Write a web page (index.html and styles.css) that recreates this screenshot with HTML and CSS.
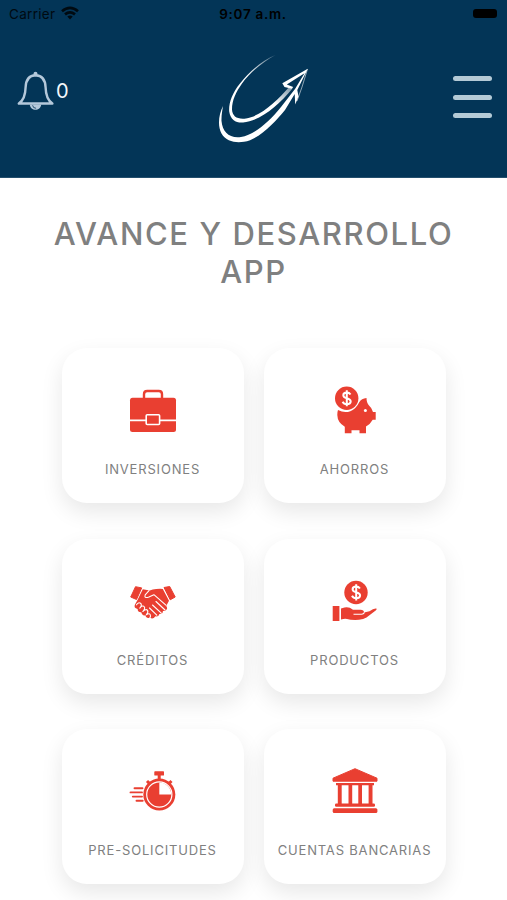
FILE: index.html
```html
<!DOCTYPE html>
<html lang="es">
<head>
<meta charset="utf-8">
<title>Avance y Desarrollo App</title>
<link rel="stylesheet" href="styles.css">
</head>
<body>
<header class="header">
  <div class="status">
    <div class="carrier"><span>Carrier</span>
      <svg width="18" height="14" viewBox="0 0 18 14" fill="none" stroke="#000" stroke-width="2.7"><path d="M1 5.2Q9-1.6 17 5.2M4 8.4q5-4.2 10 0"/><path d="M6.3 10.5q2.7-2.1 5.4 0L9 13.4z" fill="#000" stroke="none"/></svg>
    </div>
    <span class="time">9:07 a.m.</span>
    <span class="battery"></span>
  </div>
  <div class="nav">
    <div class="alerts">
      <svg width="38" height="40" viewBox="0 0 38 40" fill="none" stroke="#b4c8da" stroke-width="2.4" stroke-linejoin="round"><path d="M18.5 4.2c-7 .3-9.7 5.6-9.9 12.2C8.400 25 6.500 29.500 1.800 32.500h33.600c-4.700-3-6.600-7.500-6.800-16.100-.2-6.600-3.100-11.900-10.100-12.200z"/><circle cx="18.500" cy="2.800" r="2" fill="#b4c8da" stroke="none"/><path d="M12.800 33.500h11.400c-.5 7-10.900 7-11.400 0z" fill="#b4c8da" stroke="none"/><path d="M15.600 34.300q.4 3 3.500 3" stroke="#033557" stroke-width=".8"/></svg>
      <span class="count">0</span>
    </div>
    <svg class="logo" width="96" height="90" viewBox="14 54 96 90" fill="#fff">
      <defs><linearGradient id="fade" x1="75" y1="54" x2="50" y2="78" gradientUnits="userSpaceOnUse"><stop stop-color="#fff" stop-opacity=".25"/><stop offset="1" stop-color="#fff"/></linearGradient></defs>
      <path fill="url(#fade)" d="M75.500 55C62 60 48 73 40 83.500 32 93 28.500 104 29.200 111.500 30.500 120 36 123 43 122.500 60 121 78 106 92.500 88.500L89.500 86.500C77 101 61 116 46 118.500 37 119.500 32.500 116.500 32 109.500 32 100 36 92 42 83.500 50 72 63 62 75.500 55z"/>
      <path d="M107.800 68.700L82.300 83.300 84.500 87 91.800 88.800 93.200 87 86.800 84.400 104.500 73.300 95 89 81 107C69 122 54 135 41 137 29 138.500 22.500 132 21.500 121 21.300 115 22.400 110 23 106 18.500 115 17.500 126 21.500 133.500 26 141.500 35 143 44 141.800 60 139 75 122 85 110L94.700 94 95.200 104.500 98.500 96.500 97.300 90z"/>
      <path d="M107.500 69L102 87 97 101" fill="none" stroke="#fff" stroke-width=".8" opacity=".7"/>
    </svg>
    <div class="menu"><i></i><i></i><i></i></div>
  </div>
</header>
<main>
  <h1>AVANCE Y DESARROLLO<br>APP</h1>
  <div class="grid">
    <section class="card">
      <svg class="icon" viewBox="0 0 50 50"><path d="M16 13V8.200Q16 5 19.200 5h11.600Q34 5 34 8.200V13" fill="none" stroke="#e93f31" stroke-width="2.400"/><rect x="2" y="11.700" width="46" height="34.300" rx="2.500"/><path d="M1.500 34.300h47" stroke="#fff" stroke-width="1.700"/><rect x="18.200" y="28.800" width="13.400" height="9.700" rx="1" stroke="#fff" stroke-width="1.600"/></svg>
      <span>INVERSIONES</span>
    </section>
    <section class="card">
      <svg class="icon" viewBox="0 0 50 50"><path d="M8 24q9 5 17-1.800 3-3 4.200-6 2.300-3.700 7.300-4.200 0 5 2.500 7.500 3 2.500 4 6.500h2.700v7.800h-3q-2.200 4.200-6.700 6.700v6.800h-6.500v-3h-8v3h-6.700v-6.500Q7.500 36.500 7.300 29 7.200 26 8 24z"/><circle cx="35.400" cy="24.500" r="1.500" fill="#fff"/><circle cx="16.700" cy="12.300" r="11.700"/><path d="M20.500 8.500q-1.200-2-3.700-2-3.500 0-3.500 2.700 0 2.200 3.500 3 3.900.9 3.900 3.400 0 2.600-3.900 2.600-3 0-4.200-2.400M16.800 4.200v16" class="money"/></svg>
      <span>AHORROS</span>
    </section>
    <section class="card">
      <svg class="icon" viewBox="0 0 50 50"><path d="M7.500 9.700l6.200 1.200L8.500 22.500 2.700 20zM36 10.500l5.700-1L47.200 20l-5 2.800z" stroke="#e93f31" stroke-linejoin="round"/><path d="M14.800 12.200l7 1.300 3-.9q4-1 10-.7l6.200 11.900-2.800 5.200q2 2.500-.3 4.300-1.300 1-3 .4.300 3.200-3.500 3.200-.8 3-4 2.400-2.400 3.400-5.200 1.500-4.200 1.200-4.700-2.500-3.500.7-4.200-3-3.500.3-3.700-3.200-4.200-1-2.600-4.500L9.500 23z"/><g class="lines"><path d="M21 13.700l-3.800 4.100q-1.300 4 3.700 2.200l5-2.300 12 10.500M24.500 28l8.800 8.200M21.500 31l7.300 7.200M28 24.500l9 8.500"/><path d="M8.500 27.800q2-3 4-1.500t-.7 4.800q3-3.400 4.500-1.300 1.200 1.600-1.500 4.700 3.200-3 4.700-1.200 1.200 1.700-1.200 4.500 3-2 4 0 .8 1.300-.8 4"/></g></svg>
      <span>CRÉDITOS</span>
    </section>
    <section class="card">
      <svg class="icon" viewBox="0 0 50 50"><circle cx="26" cy="15.500" r="11.700"/><path d="M29.900 11.500q-1.200-2-3.800-2-3.500 0-3.500 2.700 0 2.200 3.600 3 3.900.9 3.900 3.400 0 2.600-3.900 2.600-3 0-4.200-2.400M26.200 7.200v16.200" class="money"/><path d="M2.700 29h6.700v15H2.700zM11 31.500l3.500-1q4.500-1 8.500 2.200h7.500q3.500 0 3.500 2.800l5.500-1.300q4-3 6.700-2.700 1.200.4-.2 1.700l-9.500 7.300q-3 2-7.500 2.300-8 .4-12-.8-2-.6-6 .4z"/><path d="M23.500 37.300h8q2.600-.2 2.800-2" stroke="#fff" stroke-width="1.100" fill="none"/></svg>
      <span>PRODUCTOS</span>
    </section>
    <section class="card">
      <svg class="icon" viewBox="0 0 50 50"><circle cx="31.300" cy="27.500" r="16"/><circle cx="31.300" cy="27.500" r="12.600" fill="none" stroke="#fff" stroke-width="1.200"/><path d="M31.300 27.500V15.600a11.900 11.900 0 0 1 11.900 11.900z" fill="#fff"/><rect x="26.300" y="4.300" width="9.700" height="4.300" rx=".7"/><path d="M31.200 8v5M19 14l3 3M43.500 14l-3 3" stroke="#e93f31" stroke-width="3"/><path d="M6.500 21.300h8M2.500 25.400H14M4.800 29.600H14M8.500 33.800h6.200" stroke="#e93f31" stroke-width="1.900" stroke-linecap="round"/></svg>
      <span>PRE-SOLICITUDES</span>
    </section>
    <section class="card">
      <svg class="icon" viewBox="0 0 50 50"><path d="M25 1.700l22 9.500v3H3v-3z" stroke="#e93f31" stroke-linejoin="round"/><path d="M6 16h38v2.300H6zM7.800 18h3.900v19H7.800zM18.500 18h3.700v19h-3.700zM28.300 18H32v19h-3.700zM38.600 18h3.900v19h-3.900z"/><rect x="5" y="36.500" width="40" height="3.200" rx="1.300"/><rect x="2.700" y="41.300" width="44.700" height="4.700" rx="1.500"/></svg>
      <span>CUENTAS BANCARIAS</span>
    </section>
  </div>
</main>
</body>
</html>
```
FILE: styles.css
```css
* { box-sizing: border-box; }
body { margin: 0; background: #fff; font-family: Inter, sans-serif; overflow: hidden; height: 900px; }
.header { height: 178px; background: #033557; border-bottom: 1px solid #244f6d; }
.status { display: grid; grid-template-columns: 1fr auto 1fr; align-items: center; height: 28px; padding: 0 10px 0 9px; color: #000; font-size: 13.5px; }
.carrier { display: flex; align-items: center; gap: 6px; opacity: .8; letter-spacing: .3px; }
.carrier svg { margin-top: -3px; }
.time { font-weight: 600; font-size: 13.5px; letter-spacing: .7px; }
.battery { justify-self: end; width: 24px; height: 9px; margin-top: -2px; border-radius: 3px; background: #000; }
.nav { display: grid; grid-template-columns: 197px 96px 1fr; padding: 26px 15px 0 17px; }
.alerts { display: flex; gap: 1px; padding-top: 17px; }
.count { color: #f4f8fb; font-size: 20px; line-height: 24px; padding-top: 8px; }
.logo { display: block; }
.menu { justify-self: end; display: flex; flex-direction: column; gap: 13.5px; padding-top: 22px; }
.menu i { width: 39px; height: 5px; border-radius: 3px; background: #b4cad6; }
h1 { margin: 0; padding-top: 37px; text-align: center; font-size: 31px; font-weight: 500; line-height: 38px; color: #7f8080; letter-spacing: 1.6px; white-space: nowrap; }
.grid { display: grid; grid-template-columns: 182px 182px; grid-auto-rows: 155px; gap: 35.5px 20px; justify-content: center; padding-top: 57px; }
.card { display: flex; flex-direction: column; align-items: center; border-radius: 25px; background: #fff; box-shadow: 0 9px 22px rgba(0, 0, 0, .095); padding-top: 38px; }
.icon { width: 50px; height: 50px; fill: #e93f31; }
.card span { margin-top: 24px; font-size: 13px; line-height: 18px; color: #808080; letter-spacing: .82px; white-space: nowrap; }
.money { fill: none; stroke: #fff; stroke-width: 2; }
.lines { fill: none; stroke: #fff; stroke-width: 1.1; stroke-linecap: round; stroke-linejoin: round; }
```
